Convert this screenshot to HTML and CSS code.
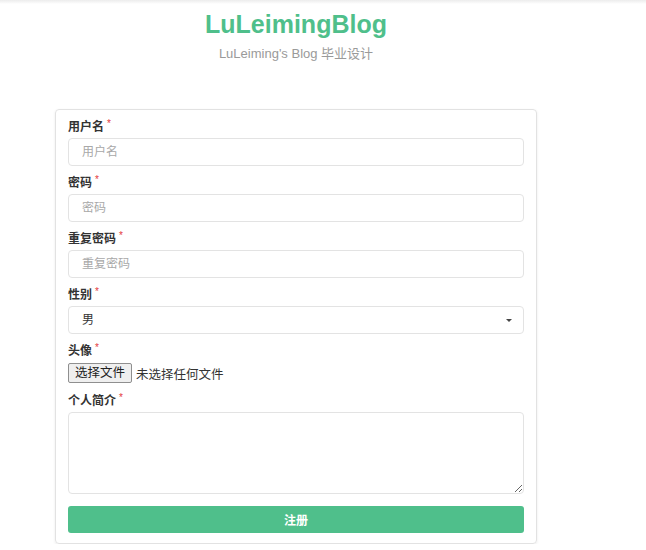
FILE: index.html
```
<!DOCTYPE html>
<html lang="zh-CN">
<head>
    <meta charset="UTF-8">
    <title>注册 - LuLeimingBlog</title>
    <link rel="stylesheet" href="styles.css">
</head>
<body>
    <div class="topbar"></div>

    <div class="main">
        <header class="brand">
            <h1>LuLeimingBlog</h1>
            <p>LuLeiming's Blog 毕业设计</p>
        </header>

        <form class="card">
            <div class="field">
                <label class="req">用户名</label>
                <input class="control" type="text" placeholder="用户名">
            </div>
            <div class="field">
                <label class="req">密码</label>
                <input class="control" type="password" placeholder="密码">
            </div>
            <div class="field">
                <label class="req">重复密码</label>
                <input class="control" type="password" placeholder="重复密码">
            </div>
            <div class="field">
                <label class="req">性别</label>
                <div class="select-wrap">
                    <select class="control">
                        <option>男</option>
                        <option>女</option>
                    </select>
                </div>
            </div>
            <div class="field">
                <label class="req">头像</label>
                <div class="file-row">
                    <span class="file-btn">选择文件</span>
                    <span class="file-name">未选择任何文件</span>
                </div>
            </div>
            <div class="field">
                <label class="req">个人简介</label>
                <textarea class="control area"></textarea>
            </div>
            <button class="submit" type="button">注册</button>
        </form>
    </div>
</body>
</html>
```

FILE: styles.css
```
body {
    margin: 0;
    font-family: "Liberation Sans", "Noto Sans CJK SC", sans-serif;
    background-color: #fff;
    color: #333;
}

.topbar {
    height: 4px;
    background: linear-gradient(#ececec, #f7f7f7 60%, #fff);
}

.main {
    width: 482px;
    margin-left: 55px;
}

.brand {
    text-align: center;
    padding-top: 5px;
}

.brand h1 {
    margin: 0;
    font-size: 25px;
    line-height: 30px;
    font-weight: bold;
    color: #4fbf8b;
}

.brand p {
    margin: 6px 0 0;
    font-size: 13px;
    line-height: 18px;
    color: #9a9a9a;
}

.card {
    margin-top: 46px;
    border: 1px solid #e2e2e2;
    border-radius: 4px;
    box-shadow: 0 1px 3px rgba(0, 0, 0, 0.08);
    padding: 9px 12px 10px;
}

.field {
    margin-bottom: 9px;
}

.field label {
    display: block;
    height: 16px;
    font-size: 12px;
    line-height: 16px;
    font-weight: bold;
    color: #333;
    margin-bottom: 3px;
    overflow: visible;
}

.req::after {
    content: "*";
    position: relative;
    top: -4px;
    color: #e4393c;
    font-size: 10px;
    line-height: 0;
    margin-left: 3px;
    font-weight: normal;
}

.control {
    display: block;
    box-sizing: border-box;
    width: 100%;
    height: 28px;
    padding: 0 13px;
    border: 1px solid #e3e3e3;
    border-radius: 4px;
    font-family: inherit;
    font-size: 12px;
    color: #333;
    background-color: #fff;
    outline: none;
}

.control::placeholder {
    color: #a8a8a8;
}

.select-wrap {
    position: relative;
}

.select-wrap select {
    appearance: none;
    -webkit-appearance: none;
}

.select-wrap::after {
    content: "";
    position: absolute;
    right: 12px;
    top: 13px;
    border-left: 3px solid transparent;
    border-right: 3px solid transparent;
    border-top: 3px solid #444;
}

.file-row {
    display: flex;
    align-items: center;
    height: 22px;
}

.file-btn {
    box-sizing: border-box;
    height: 20px;
    line-height: 18px;
    padding: 0 6px;
    border: 1px solid #8f8f8f;
    border-radius: 2px;
    background-color: #efefef;
    font-size: 12.5px;
    color: #222;
}

.file-name {
    margin-left: 4px;
    font-size: 12.5px;
    color: #333;
}

.area {
    height: 82px;
    padding: 6px 13px;
    resize: vertical;
}

.submit {
    display: block;
    width: 100%;
    height: 27px;
    margin-top: 12px;
    border: none;
    border-radius: 3px;
    background-color: #4fbf8b;
    color: #fff;
    font-family: inherit;
    font-size: 12px;
    font-weight: bold;
    cursor: pointer;
}
```
